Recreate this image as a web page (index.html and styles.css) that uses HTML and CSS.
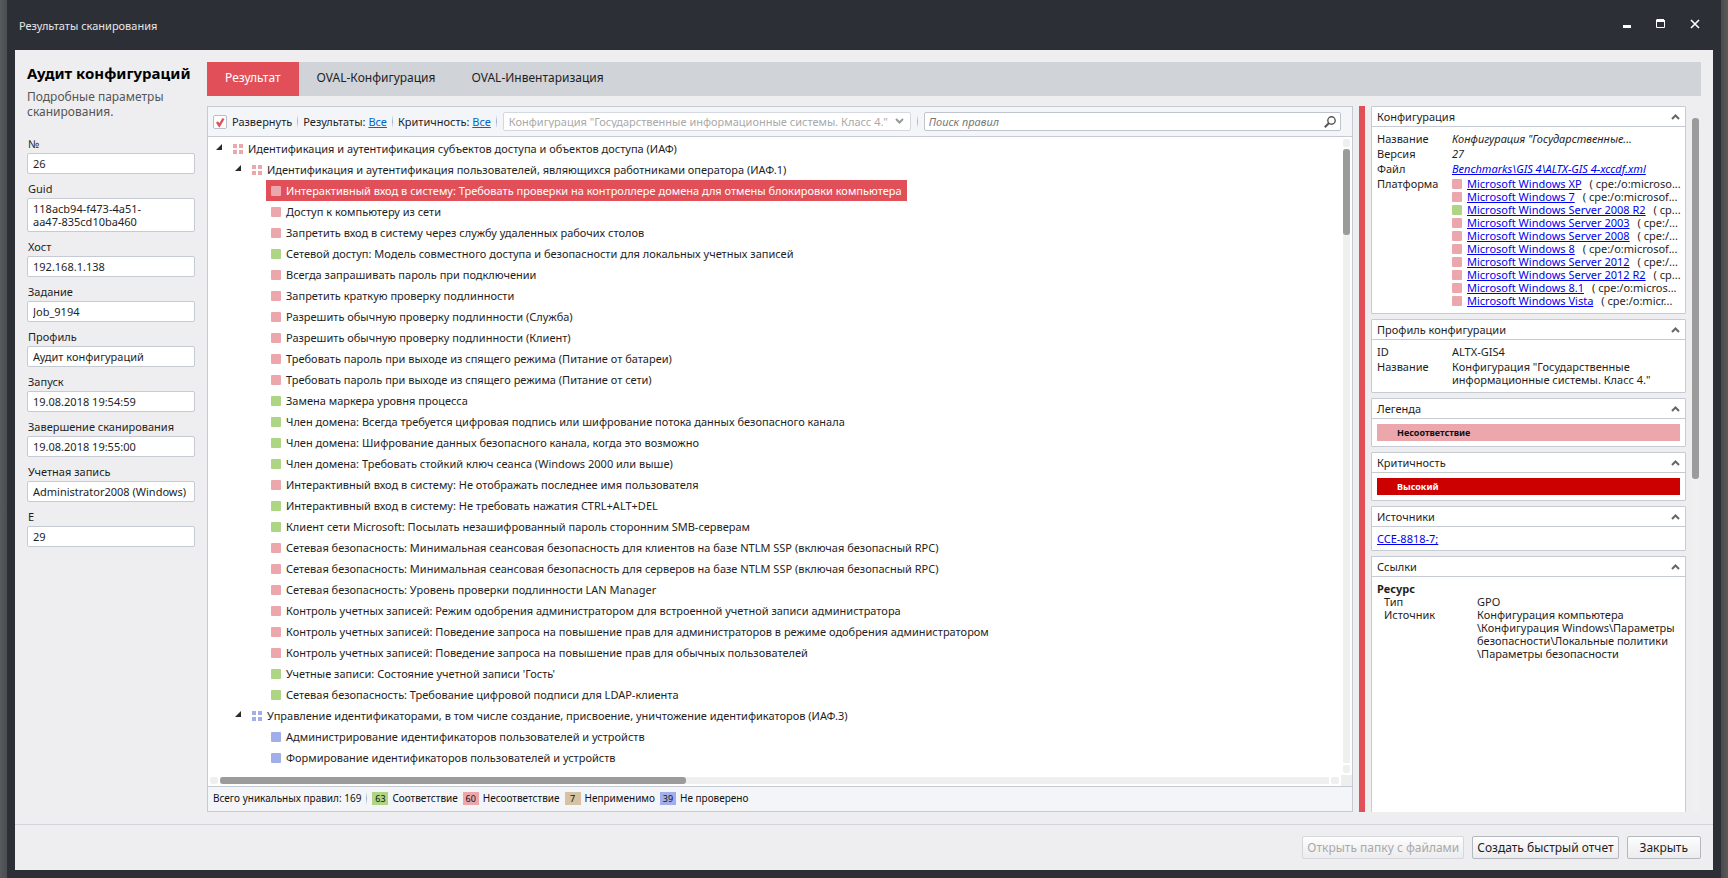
FILE: index.html
```html
<!DOCTYPE html>
<html lang="ru">
<head>
<meta charset="utf-8">
<title>Результаты сканирования</title>
<link rel="stylesheet" href="styles.css">
</head>
<body>
<svg width="0" height="0" class="defs" aria-hidden="true">
  <symbol id="chev" viewBox="0 0 9 6"><path d="M1 5 L4.5 1.5 L8 5" fill="none" stroke="currentColor" stroke-width="2"/></symbol>
  <symbol id="tri" viewBox="0 0 6 6"><path d="M6 0 V6 H0 Z" fill="#2b2b2b"/></symbol>
</svg>
<div class="window">
  <header class="titlebar">
    <h1>Результаты сканирования</h1>
    <div class="winbtns">
      <button type="button" aria-label="Свернуть"><svg width="10" height="10"><path d="M1 6h8v3H1z" fill="#fff"/></svg></button>
      <button type="button" aria-label="Развернуть окно"><svg width="10" height="10"><path d="M0.500 1.500h8v7h-8z" fill="none" stroke="#fff"/><path d="M1 0h7v3H0V1z M0 1h9v2H0z" fill="#fff"/></svg></button>
      <button type="button" aria-label="Закрыть окно"><svg width="10" height="10"><path d="M1 1 L9 9 M9 1 L1 9" stroke="#fff" stroke-width="1.600"/></svg></button>
    </div>
  </header>
  <div class="client">
    <div class="body">
      <aside class="side">
        <h2>Аудит конфигураций</h2>
        <p>Подробные параметры сканирования.</p>
        <div class="field"><label for="f1">№</label><input id="f1" value="26" readonly></div>
        <div class="field"><label for="f2">Guid</label><textarea id="f2" rows="2" readonly>118acb94-f473-4a51-aa47-835cd10ba460</textarea></div>
        <div class="field"><label for="f3">Хост</label><input id="f3" value="192.168.1.138" readonly></div>
        <div class="field"><label for="f4">Задание</label><input id="f4" value="Job_9194" readonly></div>
        <div class="field"><label for="f5">Профиль</label><input id="f5" value="Аудит конфигураций" readonly></div>
        <div class="field"><label for="f6">Запуск</label><input id="f6" value="19.08.2018 19:54:59" readonly></div>
        <div class="field"><label for="f7">Завершение сканирования</label><input id="f7" value="19.08.2018 19:55:00" readonly></div>
        <div class="field"><label for="f8">Учетная запись</label><input id="f8" value="Administrator2008 (Windows)" readonly></div>
        <div class="field"><label for="f9">E</label><input id="f9" value="29" readonly></div>
      </aside>
      <main class="main">
        <nav class="tabs">
          <button type="button" class="active">Результат</button>
          <button type="button">OVAL-Конфигурация</button>
          <button type="button">OVAL-Инвентаризация</button>
        </nav>
        <div class="split">
          <section class="results">
            <div class="toolbar">
              <label class="expand"><input type="checkbox" checked><svg class="tick" width="14" height="14" viewBox="0 0 14 14"><path d="M4 7 L6.300 10.500 L10.500 3.500" fill="none" stroke="#e15058" stroke-width="2.400"/></svg>Развернуть</label>
              <i class="sep"></i>
              <span>Результаты: <a href="#">Все</a></span>
              <i class="sep"></i>
              <span>Критичность: <a href="#">Все</a></span>
              <i class="sep"></i>
              <div class="combo">
                <select disabled aria-label="Конфигурация"><option>Конфигурация "Государственные информационные системы. Класс 4."</option></select>
                <svg class="down" width="9" height="6"><use href="#chev"/></svg>
              </div>
              <i class="sep"></i>
              <div class="search">
                <input type="text" placeholder="Поиск правил" aria-label="Поиск правил">
                <svg width="12" height="12" viewBox="0 0 12 12"><circle cx="7.500" cy="4.500" r="3.700" fill="none" stroke="#555" stroke-width="1.400"/><path d="M5 7 L0.800 11.200" stroke="#555" stroke-width="2"/></svg>
              </div>
            </div>
            <div class="treebox">
              <ul class="tree">
                <li><div class="row"><svg class="tg"><use href="#tri"/></svg><span class="label"><i class="grp c-fail"></i>Идентификация и аутентификация субъектов доступа и объектов доступа (ИАФ)</span></div>
                  <ul>
                    <li><div class="row"><svg class="tg"><use href="#tri"/></svg><span class="label"><i class="grp c-fail"></i>Идентификация и аутентификация пользователей, являющихся работниками оператора (ИАФ.1)</span></div>
                      <ul class="leaves">
                        <li><span class="label sel"><i class="sq fail"></i>Интерактивный вход в систему: Требовать проверки на контроллере домена для отмены блокировки компьютера</span></li>
                        <li><span class="label"><i class="sq fail"></i>Доступ к компьютеру из сети</span></li>
                        <li><span class="label"><i class="sq fail"></i>Запретить вход в систему через службу удаленных рабочих столов</span></li>
                        <li><span class="label"><i class="sq pass"></i>Сетевой доступ: Модель совместного доступа и безопасности для локальных учетных записей</span></li>
                        <li><span class="label"><i class="sq fail"></i>Всегда запрашивать пароль при подключении</span></li>
                        <li><span class="label"><i class="sq fail"></i>Запретить краткую проверку подлинности</span></li>
                        <li><span class="label"><i class="sq fail"></i>Разрешить обычную проверку подлинности (Служба)</span></li>
                        <li><span class="label"><i class="sq fail"></i>Разрешить обычную проверку подлинности (Клиент)</span></li>
                        <li><span class="label"><i class="sq fail"></i>Требовать пароль при выходе из спящего режима (Питание от батареи)</span></li>
                        <li><span class="label"><i class="sq fail"></i>Требовать пароль при выходе из спящего режима (Питание от сети)</span></li>
                        <li><span class="label"><i class="sq pass"></i>Замена маркера уровня процесса</span></li>
                        <li><span class="label"><i class="sq pass"></i>Член домена: Всегда требуется цифровая подпись или шифрование потока данных безопасного канала</span></li>
                        <li><span class="label"><i class="sq pass"></i>Член домена: Шифрование данных безопасного канала, когда это возможно</span></li>
                        <li><span class="label"><i class="sq pass"></i>Член домена: Требовать стойкий ключ сеанса (Windows 2000 или выше)</span></li>
                        <li><span class="label"><i class="sq fail"></i>Интерактивный вход в систему: Не отображать последнее имя пользователя</span></li>
                        <li><span class="label"><i class="sq pass"></i>Интерактивный вход в систему: Не требовать нажатия CTRL+ALT+DEL</span></li>
                        <li><span class="label"><i class="sq pass"></i>Клиент сети Microsoft: Посылать незашифрованный пароль сторонним SMB-серверам</span></li>
                        <li><span class="label"><i class="sq fail"></i>Сетевая безопасность: Минимальная сеансовая безопасность для клиентов на базе NTLM SSP (включая безопасный RPC)</span></li>
                        <li><span class="label"><i class="sq fail"></i>Сетевая безопасность: Минимальная сеансовая безопасность для серверов на базе NTLM SSP (включая безопасный RPC)</span></li>
                        <li><span class="label"><i class="sq fail"></i>Сетевая безопасность: Уровень проверки подлинности LAN Manager</span></li>
                        <li><span class="label"><i class="sq fail"></i>Контроль учетных записей: Режим одобрения администратором для встроенной учетной записи администратора</span></li>
                        <li><span class="label"><i class="sq fail"></i>Контроль учетных записей: Поведение запроса на повышение прав для администраторов в режиме одобрения администратором</span></li>
                        <li><span class="label"><i class="sq fail"></i>Контроль учетных записей: Поведение запроса на повышение прав для обычных пользователей</span></li>
                        <li><span class="label"><i class="sq pass"></i>Учетные записи: Состояние учетной записи 'Гость'</span></li>
                        <li><span class="label"><i class="sq pass"></i>Сетевая безопасность: Требование цифровой подписи для LDAP-клиента</span></li>
                      </ul>
                    </li>
                    <li><div class="row"><svg class="tg"><use href="#tri"/></svg><span class="label"><i class="grp c-none"></i>Управление идентификаторами, в том числе создание, присвоение, уничтожение идентификаторов (ИАФ.3)</span></div>
                      <ul class="leaves">
                        <li><span class="label"><i class="sq none"></i>Администрирование идентификаторов пользователей и устройств</span></li>
                        <li><span class="label"><i class="sq none"></i>Формирование идентификаторов пользователей и устройств</span></li>
                      </ul>
                    </li>
                  </ul>
                </li>
              </ul>
              <div class="vbar"><i class="cap"></i><div class="track"><div class="thumb"></div></div><i class="cap"></i></div>
              <div class="hbar"><i class="cap"></i><div class="track"><div class="thumb"></div></div><i class="cap"></i></div>
              <div class="corner"></div>
            </div>
            <div class="status">
              <span class="total">Всего уникальных правил: 169</span>
              <i class="sep"></i>
              <span class="stat"><b class="pass">63</b>Соответствие</span>
              <span class="stat"><b class="fail">60</b>Несоответствие</span>
              <span class="stat"><b class="na">7</b>Неприменимо</span>
              <span class="stat"><b class="none">39</b>Не проверено</span>
            </div>
          </section>
          <div class="splitter"></div>
          <section class="details">
            <div class="cards">
              <article class="card">
                <h3>Конфигурация<button type="button" aria-label="Свернуть раздел"><svg width="9" height="6"><use href="#chev"/></svg></button></h3>
                <dl class="props">
                  <dt>Название</dt><dd class="it">Конфигурация "Государственные...</dd>
                  <dt>Версия</dt><dd class="it">27</dd>
                  <dt>Файл</dt><dd class="it"><a href="#">Benchmarks\GIS 4\ALTX-GIS 4-xccdf.xml</a></dd>
                  <dt>Платформа</dt>
                  <dd><ul class="plats">
                    <li><i class="sq fail"></i><a href="#">Microsoft Windows XP</a><span>( cpe:/o:microso...</span></li>
                    <li><i class="sq fail"></i><a href="#">Microsoft Windows 7</a><span>( cpe:/o:microsof...</span></li>
                    <li><i class="sq pass"></i><a href="#">Microsoft Windows Server 2008 R2</a><span>( cp...</span></li>
                    <li><i class="sq fail"></i><a href="#">Microsoft Windows Server 2003</a><span>( cpe:/...</span></li>
                    <li><i class="sq fail"></i><a href="#">Microsoft Windows Server 2008</a><span>( cpe:/...</span></li>
                    <li><i class="sq fail"></i><a href="#">Microsoft Windows 8</a><span>( cpe:/o:microsof...</span></li>
                    <li><i class="sq fail"></i><a href="#">Microsoft Windows Server 2012</a><span>( cpe:/...</span></li>
                    <li><i class="sq fail"></i><a href="#">Microsoft Windows Server 2012 R2</a><span>( cp...</span></li>
                    <li><i class="sq fail"></i><a href="#">Microsoft Windows 8.1</a><span>( cpe:/o:micros...</span></li>
                    <li><i class="sq fail"></i><a href="#">Microsoft Windows Vista</a><span>( cpe:/o:micr...</span></li>
                  </ul></dd>
                </dl>
              </article>
              <article class="card">
                <h3>Профиль конфигурации<button type="button" aria-label="Свернуть раздел"><svg width="9" height="6"><use href="#chev"/></svg></button></h3>
                <dl class="props">
                  <dt>ID</dt><dd>ALTX-GIS4</dd>
                  <dt>Название</dt><dd>Конфигурация "Государственные<br>информационные системы. Класс 4."</dd>
                </dl>
              </article>
              <article class="card">
                <h3>Легенда<button type="button" aria-label="Свернуть раздел"><svg width="9" height="6"><use href="#chev"/></svg></button></h3>
                <div class="band fail">Несоответствие</div>
              </article>
              <article class="card">
                <h3>Критичность<button type="button" aria-label="Свернуть раздел"><svg width="9" height="6"><use href="#chev"/></svg></button></h3>
                <div class="band high">Высокий</div>
              </article>
              <article class="card">
                <h3>Источники<button type="button" aria-label="Свернуть раздел"><svg width="9" height="6"><use href="#chev"/></svg></button></h3>
                <p class="source"><a href="#">CCE-8818-7;</a></p>
              </article>
              <article class="card last">
                <h3>Ссылки<button type="button" aria-label="Свернуть раздел"><svg width="9" height="6"><use href="#chev"/></svg></button></h3>
                <div class="refs">
                  <strong>Ресурс</strong>
                  <dl>
                    <dt>Тип</dt><dd>GPO</dd>
                    <dt>Источник</dt><dd>Конфигурация компьютера<br>\Конфигурация Windows\Параметры<br>безопасности\Локальные политики<br>\Параметры безопасности</dd>
                  </dl>
                </div>
              </article>
            </div>
            <div class="vbar side-bar"><div class="track"><div class="thumb"></div></div></div>
          </section>
        </div>
      </main>
    </div>
    <footer class="footer">
      <button type="button" disabled>Открыть папку с файлами</button>
      <button type="button">Создать быстрый отчет</button>
      <button type="button" class="close">Закрыть</button>
    </footer>
  </div>
</div>
</body>
</html>
```
FILE: styles.css
```css
* { box-sizing: border-box; }
html, body { height: 100%; margin: 0; }
body {
  padding: 0 7px;
  background: linear-gradient(90deg, #555a5c, #4a4e50 7px, #4a4a4a calc(100% - 7px), #5a5a5a);
  font: 11px/13px "Noto Sans", "Open Sans", sans-serif;
  color: #1e1e1e;
}
ul, dl, dd, p, h1, h2, h3 { margin: 0; padding: 0; font-weight: normal; }
ul { list-style: none; }
button, input, select, textarea { font: inherit; color: inherit; margin: 0; }
a { color: #0000f0; }
.defs { position: absolute; }

.fail { background: #eba7ac; }
.pass { background: #add584; }
.none { background: #a1aeea; }
.na { background: #d5c2a3; }
.c-fail { color: #eba7ac; }
.c-none { color: #a1aeea; }

.window { height: 100%; display: flex; flex-direction: column; background: #2d2f37; padding: 0 8px 8px; }
.titlebar { height: 50px; flex: none; display: flex; justify-content: space-between; align-items: center; padding: 0 13px 2px 4px; }
.titlebar h1 { font-size: 11px; line-height: 16px; color: #e6e6e6; padding-top: 4px; }
.winbtns { display: flex; gap: 24px; }
.winbtns button { border: 0; background: none; padding: 0; width: 10px; height: 10px; display: block; }
.winbtns svg { display: block; }

.client { flex: 1; min-height: 0; display: flex; flex-direction: column; background: #eeeef0; }
.body { flex: 1; min-height: 0; display: flex; gap: 12px; padding: 12px; }

.side { width: 168px; flex: none; }
.side h2 { font-size: 15px; line-height: 22px; font-weight: bold; color: #000; white-space: nowrap; }
.side p { font-size: 12px; line-height: 15px; color: #555; margin: 5px 0 18px; }
.field { display: flex; flex-direction: column; margin-bottom: 8px; }
.field label { line-height: 14px; padding: 0 0 2px 1px; }
.field input, .field textarea {
  width: 100%; height: 21px; border: 1px solid #c6cad3; border-radius: 2px;
  background: #fff; padding: 0 5px; outline: 0;
}
.field textarea { height: 34px; padding: 3px 40px 3px 5px; line-height: 13px; resize: none; overflow: hidden; display: block; }

.main { flex: 1; min-width: 0; display: flex; flex-direction: column; gap: 10px; }
.tabs { height: 34px; flex: none; display: flex; background: #d0d3d8; }
.tabs button { border: 0; background: none; padding: 0 18px 2px; font-size: 12px; line-height: 16px; }
.tabs .active { background: #e15058; color: #fff; }

.split { flex: 1; min-height: 0; display: flex; gap: 6px; }
.results { flex: 1; min-width: 0; display: flex; flex-direction: column; border: 1px solid #c6cad3; background: #fff; }
.toolbar { height: 30px; flex: none; display: flex; align-items: center; gap: 5px; padding: 0 11px 0 5px; background: #f3f5f9; border-bottom: 1px solid #c6cad3; white-space: nowrap; }
.toolbar a { color: #0067c8; }
.sep { width: 1px; height: 13px; flex: none; background: linear-gradient(#f3f5f9, #9fb2cb, #f3f5f9); }
.expand { display: flex; align-items: center; gap: 5px; position: relative; }
.expand input { appearance: none; width: 14px; height: 14px; border: 1px solid #b9bec9; border-radius: 2px; background: #fff; }
.tick { position: absolute; left: 0; top: 0; pointer-events: none; }
.combo { position: relative; width: 408px; height: 19px; margin: 0 1px; flex: none; }
.combo select { appearance: none; width: 100%; height: 19px; border: 1px solid #d5d8df; border-radius: 2px; background: #fff; padding: 0 16px 0 5px; color: #a9a9a9; opacity: 1; }
.down { position: absolute; right: 7px; top: 6px; color: #999; transform: rotate(180deg); }
.search { flex: 1; display: flex; align-items: center; height: 19px; margin-left: 1px; border: 1px solid #c0c4cf; border-radius: 2px; background: #fff; padding: 0 4px; }
.search input { flex: 1; min-width: 0; border: 0; outline: 0; padding: 0; background: none; height: 17px; }
.search input::placeholder { font-style: italic; color: #777; opacity: 1; }

.treebox { flex: 1; min-height: 0; display: grid; grid-template: minmax(0, 1fr) 11px / minmax(0, 1fr) 11px; }
.tree { padding: 1px 0 0 8px; overflow: hidden; white-space: nowrap; }
.tree ul { padding-left: 19px; }
.tree .leaves { padding-left: 31px; }
.row, .leaves li { display: flex; height: 21px; }
.tg { width: 6px; height: 6px; margin: 6px 6px 0 0; flex: none; }
.label { display: flex; align-items: center; gap: 5px; padding: 0 5px; height: 21px; }
.sel { background: #e15058; color: #fff; }
.sq { width: 10px; height: 10px; flex: none; border-radius: 1px; }
.grp { width: 10px; height: 10px; flex: none; background:
  linear-gradient(currentColor, currentColor) 0 0 / 4px 4px no-repeat,
  linear-gradient(currentColor, currentColor) 6px 0 / 4px 4px no-repeat,
  linear-gradient(currentColor, currentColor) 0 6px / 4px 4px no-repeat,
  linear-gradient(currentColor, currentColor) 6px 6px / 4px 4px no-repeat; }

.vbar { display: flex; flex-direction: column; gap: 2px; width: 7px; margin-left: 2px; padding: 2px 0; }
.hbar { display: flex; gap: 2px; height: 7px; margin: 2px 0; padding: 0 2px; }
.cap { width: 8px; height: 8px; flex: none; border-radius: 2px; background: #efefef; }
.vbar .cap { width: 7px; }
.hbar .cap { height: 7px; }
.track { flex: 1; background: #efefef; }
.thumb { background: #9b9b9b; border-radius: 3px; }
.vbar .thumb { width: 7px; height: 14%; }
.hbar .thumb { height: 7px; width: 42%; }
.corner { background: #eee; }

.status { height: 25px; flex: none; display: flex; align-items: center; gap: 5px; padding: 0 5px 2px; background: #f3f5f9; border-top: 1px solid #c6cad3; font-size: 10px; color: #111; }
.stat { display: flex; align-items: center; gap: 4px; }
.stat b { width: 16px; height: 13px; text-align: center; font-weight: normal; font-size: 9px; }

.splitter { width: 6px; background: #e15058; flex: none; }
.details { width: 330px; flex: none; display: flex; gap: 4px; }
.cards { width: 315px; flex: none; display: flex; flex-direction: column; gap: 5px; overflow: hidden; }
.card { background: #fff; border: 1px solid #c6cad3; border-radius: 1px; flex: none; }
.card.last { flex: 1; border-bottom: 0; }
.card h3 { font-size: 11px; height: 20px; display: flex; align-items: center; justify-content: space-between; padding: 0 5px; border-bottom: 1px solid #c6cad3; }
.card button { border: 0; background: none; padding: 0; width: 9px; height: 6px; color: #666; display: block; }
.card button svg { display: block; }
.props { display: grid; grid-template-columns: 75px minmax(0, 1fr); row-gap: 2px; padding: 5px 5px 6px; }
.it { font-style: italic; }
.plats li { display: flex; align-items: center; gap: 5px; height: 13px; white-space: nowrap; }
.plats span { padding-left: 3px; }
.band { margin: 5px; height: 17px; line-height: 17px; padding-left: 20px; font-size: 9px; font-weight: bold; color: #111; }
.band.high { background: #cc0000; color: #fff; }
.source { padding: 5px; }
.refs { padding: 5px; }
.refs strong { display: block; }
.refs dl { display: grid; grid-template-columns: 93px minmax(0, 1fr); padding-left: 7px; white-space: nowrap; }
.side-bar { padding: 12px 0 0; }
.side-bar .track { background: #f0f0f1; }
.side-bar .thumb { height: 52%; }

.footer { flex: none; height: 46px; display: flex; justify-content: flex-end; align-items: center; gap: 8px; padding: 0 12px; border-top: 1px solid #d3d5d9; }
.footer button { height: 23px; padding: 0 4px; font-size: 12px; line-height: 16px; border: 1px solid #b4b8c0; border-radius: 2px; background: linear-gradient(#fdfdfd, #ececee); }
.footer .close { padding: 0 12px; }
.footer button:disabled { color: #a9a9a9; border-color: #d5d7dc; }
```
